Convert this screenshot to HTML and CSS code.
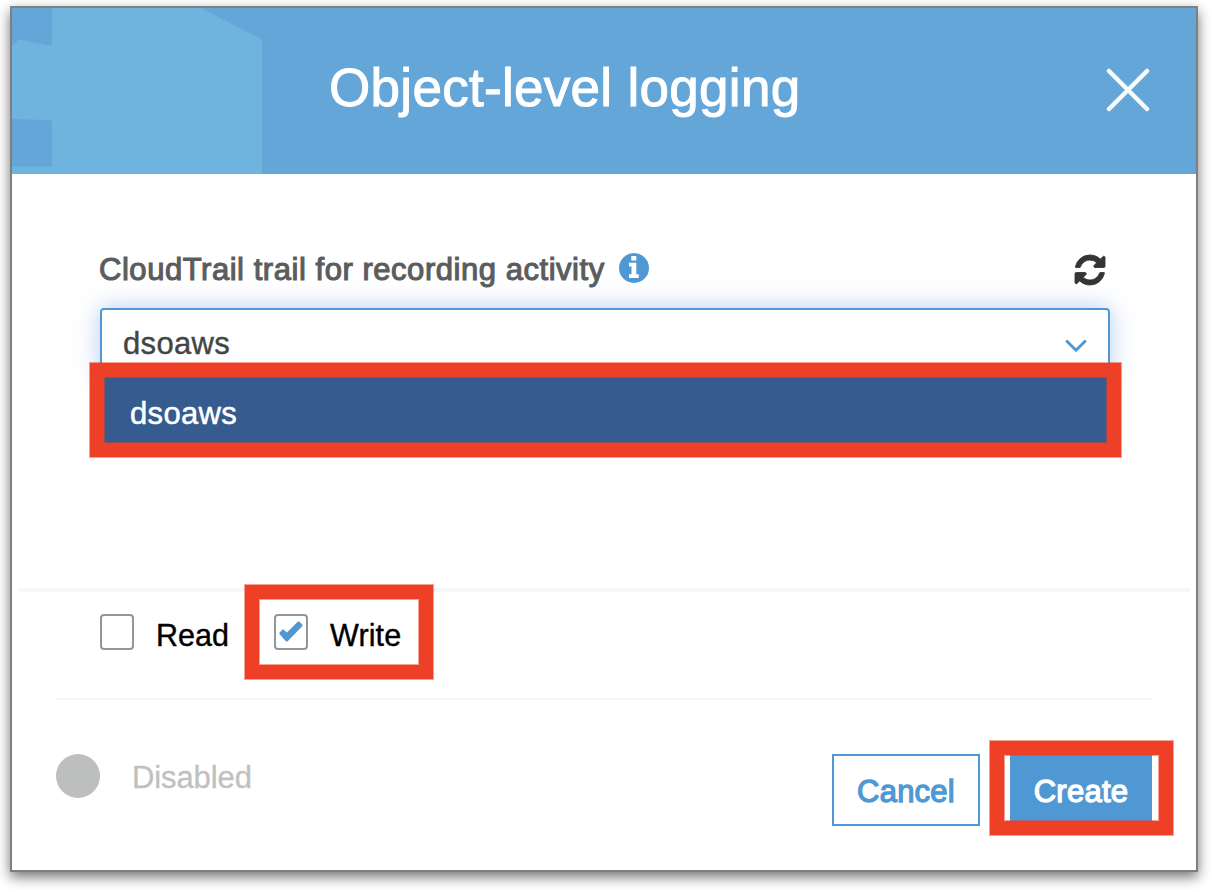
FILE: index.html
```html
<!DOCTYPE html>
<html lang="en">
<head>
<meta charset="utf-8">
<title>Object-level logging</title>
<link rel="stylesheet" href="styles.css">
</head>
<body>
<div class="dialog">
  <header class="header">
    <svg class="header-art" width="252" height="166" viewBox="0 0 252 166" aria-hidden="true">
      <path fill="#6fb3df" d="M40 0H189L250 31.500V166H0V158.500H40V112.300L0 111V37.500L7 31.500L40 38Z"/>
    </svg>
    <h1 class="title">Object-level logging</h1>
    <button class="close" aria-label="Close">
      <svg width="44" height="44" viewBox="0 0 44 44"><path d="M3 3L41 41M41 3L3 41" stroke="#fff" stroke-opacity=".95" stroke-width="4.500" stroke-linecap="round"/></svg>
    </button>
  </header>

  <main class="body">
    <div class="label-row">
      <span class="label">CloudTrail trail for recording activity</span>
      <svg class="info" width="30" height="30" viewBox="0 0 30 30">
        <circle cx="15" cy="15" r="15" fill="#4f98d3"/>
        <path fill="#fff" d="M12.300 3h5v4.600h-5zM10 9.800h7.300v11.500h2.500v3.700h-9.800v-3.700h2.500v-7.800h-2.500z"/>
      </svg>
      <svg class="refresh" width="30" height="30" viewBox="0 0 1536 1536">
        <path fill="#333536" stroke="#333536" stroke-width="45" d="M1511 928q0 5-1 7-64 268-268 434.500T764 1536q-146 0-282.500-55T238 1324l-129 129q-19 19-45 19t-45-19-19-45V960q0-26 19-45t45-19h448q26 0 45 19t19 45-19 45l-137 137q71 66 161 102t187 36q134 0 250-65t186-179q11-17 53-117 8-23 30-23h192q13 0 22.500 9.500t9.500 22.500zm25-800v448q0 26-19 45t-45 19h-448q-26 0-45-19t-19-45 19-45l138-138Q969 256 768 256q-134 0-250 65T332 500q-11 17-53 117-8 23-30 23H50q-13 0-22.500-9.500T18 608v-7q65-268 270-434.500T768 0q146 0 284 55.500T1297 212l130-129q19-19 45-19t45 19 19 45z"/>
      </svg>
    </div>
    <div class="select-wrap">
      <div class="select">
        <span>dsoaws</span>
        <svg class="chevron" width="22" height="14" viewBox="0 0 22 14"><path d="M1.200 1.500L11 11.200L20.800 1.500" fill="none" stroke="#4f98d3" stroke-width="3"/></svg>
      </div>
      <div class="menu">
        <div class="option">dsoaws</div>
        <div class="mark"></div>
      </div>
    </div>
  </main>

  <div class="events">
    <label class="check"><span class="box"></span><span class="word read">Read</span></label>
    <label class="check"><span class="box"><svg width="24" height="21" viewBox="0 0 24 21"><path fill="#4f98d3" d="M.6 11.600L3.300 8.700Q4 8 4.800 8.700L8 11.600L18.700.8Q19.700 0 20.600.8L23.200 3.600Q23.900 4.500 23.200 5.300L8.700 20.300Q7.800 21 6.900 20.300L.6 13.200Q0 12.400.6 11.600Z"/></svg></span><span class="word write">Write</span><span class="mark"></span></label>
  </div>

  <footer class="footer">
    <div class="status"><span class="dot"></span><span>Disabled</span></div>
    <div class="actions">
      <button class="btn">Cancel</button>
      <div class="create-wrap">
        <button class="btn primary">Create</button>
        <div class="mark"></div>
      </div>
    </div>
  </footer>
</div>
</body>
</html>
```
FILE: styles.css
```css
* { box-sizing: border-box; }

body {
  margin: 0;
  padding: 6px 14px 18px 10px;
  height: 890px;
  overflow: hidden;
  background: #fff;
  font-family: "Liberation Sans", Arial, sans-serif;
  font-size: 31px;
}

svg { display: block; flex: none; }

button { font: inherit; margin: 0; cursor: pointer; }

.dialog {
  width: 1188px;
  height: 866px;
  border: 2px solid #808080;
  background: #fff;
  box-shadow: 0 5px 12px rgba(0, 0, 0, .55);
}

.header {
  display: flex;
  height: 166px;
  background: #64a6d8;
}

.title {
  margin: 0 0 0 65px;
  padding-top: 49px;
  width: 777px;
  color: #fff;
  font-size: 53px;
  font-weight: 400;
  line-height: 62px;
  letter-spacing: .3px;
  white-space: nowrap;
  -webkit-text-stroke: 1px #fff;
}

.close {
  align-self: flex-start;
  margin-top: 60px;
  padding: 0;
  border: 0;
  background: none;
}

.body {
  height: 414px;
  padding: 76px 86px 0 88px;
}

.label-row {
  display: flex;
  align-items: center;
  height: 40px;
  margin-bottom: 18px;
}

.label {
  width: 519px;
  color: #5b5c5e;
  letter-spacing: .54px;
  white-space: nowrap;
  -webkit-text-stroke: 1.1px #5b5c5e;
  margin-left: -1px;
}

.info { margin: -5px 0 0 1px; }

.refresh { margin: 0 5px 0 auto; overflow: visible; }

.select-wrap { position: relative; }

.select {
  display: flex;
  align-items: center;
  justify-content: space-between;
  height: 72px;
  padding: 0 21px;
  border: 2px solid #4f98d3;
  border-radius: 4px;
  color: #444;
  letter-spacing: .35px;
  -webkit-text-stroke: .4px #444;
  box-shadow: 0 0 24px rgba(70, 125, 215, .4);
}

.chevron { margin-top: 3px; }

/* Open option list, drawn over the content below the select. */
.menu {
  position: absolute;
  left: -10px;
  top: 55px;
  width: 1031px;
  height: 94px;
  padding: 14px;
}

.option {
  height: 66px;
  padding: 0 26px;
  background: #365b8f;
  color: #fff;
  line-height: 73px;
  letter-spacing: .35px;
  -webkit-text-stroke: .5px #fff;
}

/* Highlight frame laid over a control. */
.mark {
  position: absolute;
  inset: 0;
  border: 14px solid #ed4026;
  box-shadow: 0 0 0 1px rgba(237, 64, 38, .5), inset 0 0 0 1px rgba(237, 64, 38, .5);
}

.events {
  display: flex;
  height: 112px;
  margin: 0 44px;
  padding: 26px 44px 0;
  border-bottom: 2px solid #f5f6f6;
}

/* Divider between the scrolling area and the event types, wider than the row. */
.events::before {
  content: "";
  position: absolute;
  left: 19px;
  top: 588px;
  width: 1171px;
  height: 4px;
  background: #f6f8f8;
}

.check {
  position: relative;
  display: flex;
  width: 174px;
  height: 36px;
}

.check .mark { inset: -29px auto auto -29px; width: 188px; height: 94px; }

.box {
  display: flex;
  align-items: center;
  justify-content: center;
  width: 34px;
  height: 36px;
  border: 2px solid #919699;
  border-radius: 4px;
}

.box svg { margin-top: -1px; }

.word {
  margin-left: 22px;
  font-size: 30.5px;
  line-height: 43px;
  color: #000;
  -webkit-text-stroke: .4px #000;
}

.word.write { letter-spacing: .15px; }

.footer {
  display: flex;
  justify-content: space-between;
  padding: 54px 44px 0;
}

.status {
  display: flex;
  height: 44px;
  line-height: 47px;
  color: #bfc1c0;
  letter-spacing: -.1px;
  -webkit-text-stroke: .3px #bfc1c0;
}

.dot {
  width: 44px;
  height: 44px;
  margin-right: 32px;
  border-radius: 50%;
  background: #bdbfbe;
}

.actions { display: flex; gap: 30px; }

.btn {
  width: 148px;
  height: 72px;
  padding: 4px 0 0;
  border: 2px solid #4f98d3;
  background: #fff;
  color: #4f98d3;
  letter-spacing: .25px;
  -webkit-text-stroke: 1.3px currentColor;
}

.create-wrap { position: relative; }

.btn.primary {
  width: 142px;
  background: #4f98d3;
  color: #fff;
}

.create-wrap .mark { inset: -13px auto auto -20px; width: 183px; height: 94px; }
```
